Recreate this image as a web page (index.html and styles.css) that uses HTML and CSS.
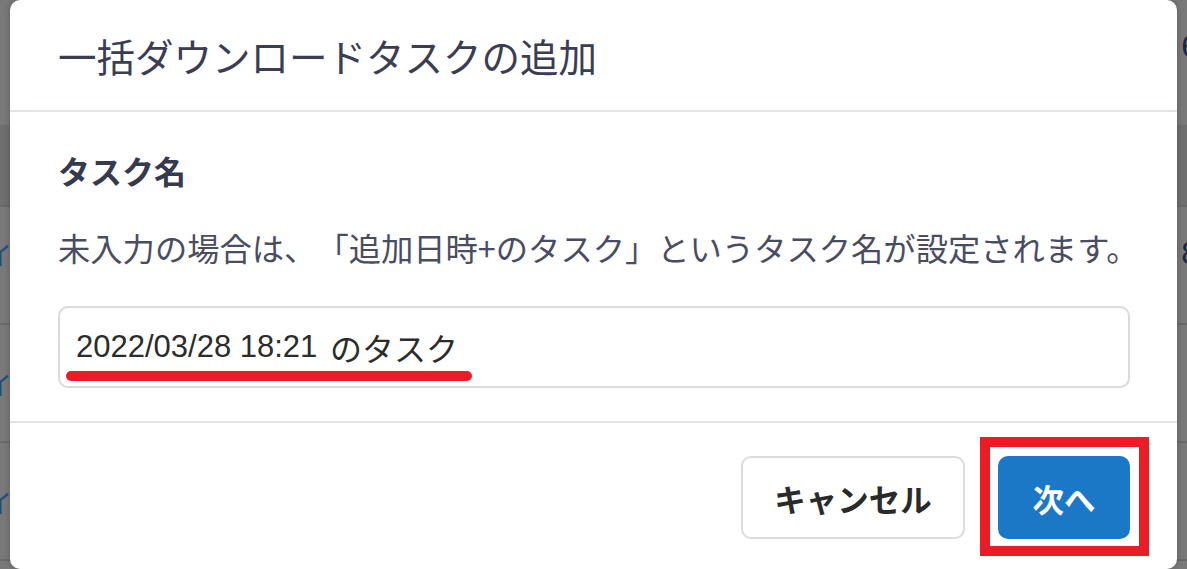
FILE: index.html
```html
<!DOCTYPE html>
<html lang="ja">
<head>
<meta charset="utf-8">
<title>一括ダウンロードタスクの追加</title>
<link rel="stylesheet" href="styles.css">
</head>
<body>
<div class="page">
  <div class="row row-top"><span class="lead"></span><span class="num">6</span></div>
  <div class="row row-band"><span class="lead"></span><span class="num"></span></div>
  <div class="row row-first"><span class="lead link">イ</span><span class="num">8</span></div>
  <div class="row"><span class="lead link">イ</span><span class="num"></span></div>
  <div class="row"><span class="lead link">イ</span><span class="num"></span></div>
  <div class="row row-last"></div>
</div>

<div class="modal">
  <div class="modal-header">
    <h2 class="modal-title">一括ダウンロードタスクの追加</h2>
  </div>
  <div class="modal-body">
    <div class="field-label">タスク名</div>
    <p class="field-help">未入力の場合は、「追加日時+のタスク」というタスク名が設定されます。</p>
    <div class="text-input">2022/03/28 18:21 <span class="input-ja">のタスク</span></div>
  </div>
  <div class="modal-footer">
    <button class="btn btn-cancel">キャンセル</button>
    <button class="btn btn-primary">次へ</button>
  </div>
  <div class="mark-underline"></div>
  <div class="mark-box"></div>
</div>
</body>
</html>
```

FILE: styles.css
```css
* { box-sizing: border-box; }

html, body {
  margin: 0;
  padding: 0;
  width: 1187px;
  height: 569px;
  overflow: hidden;
  background: #797979;
  font-family: "Noto Sans CJK JP", "Noto Sans", sans-serif;
  text-spacing-trim: space-all;
}

.page {
  display: flex;
  flex-direction: column;
  width: 1187px;
  height: 569px;
  overflow: hidden;
}

.row {
  flex: none;
  height: 118px;
  display: flex;
  justify-content: space-between;
  align-items: center;
  border-bottom: 2px solid #6a6a6a;
  overflow: hidden;
}

.row-top {
  height: 125px;
  border-bottom: none;
  align-items: flex-start;
  padding-top: 28px;
}

.row-band {
  height: 82px;
  background: #6f6f6f;
  border-bottom: 2px solid #686868;
}

.row-first {
  align-items: flex-start;
  padding-top: 28px;
}

.row-last {
  height: 8px;
  border-bottom: none;
}

.lead {
  margin-left: -14px;
  font-size: 26px;
  color: #1f4f7d;
}

.num {
  margin-right: -12px;
  font-family: "Liberation Sans", sans-serif;
  font-size: 32px;
  color: #23263a;
}

.modal {
  position: absolute;
  left: 10px;
  top: 0;
  width: 1167px;
  background: #ffffff;
  border-radius: 10px;
  box-shadow: 0 0 6px rgba(0, 0, 0, 0.25);
  display: flex;
  flex-direction: column;
}

.modal-header {
  height: 112px;
  padding: 0 48px;
  display: flex;
  align-items: center;
  border-bottom: 2px solid #e6e3e0;
}

.modal-title {
  margin: 0;
  font-size: 38.5px;
  font-weight: 400;
  line-height: 48px;
  color: #3a3d53;
}

.modal-body {
  padding: 38px 47px 33px 48px;
  border-bottom: 2px solid #e6e3e0;
}

.field-label {
  font-size: 32px;
  font-weight: 700;
  line-height: 40px;
  color: #363a4f;
}

.field-help {
  margin: 37px 0 0;
  font-size: 32.3px;
  font-weight: 400;
  line-height: 40px;
  color: #4a4d62;
  white-space: nowrap;
}

.text-input {
  margin-top: 39px;
  height: 82px;
  border: 2px solid #dcdad8;
  border-radius: 10px;
  padding: 0 16px;
  display: flex;
  align-items: center;
  white-space: pre;
  font-family: "Liberation Sans", "Noto Sans CJK JP", sans-serif;
  font-size: 31px;
  color: #2c2c2c;
}

.input-ja {
  margin-left: 4px;
  font-family: "Noto Sans CJK JP", sans-serif;
  font-size: 32px;
}

.modal-footer {
  padding: 33px 47px 30px 0;
  display: flex;
  justify-content: flex-end;
  gap: 33px;
}

.btn {
  height: 83px;
  border-radius: 10px;
  font-family: "Noto Sans CJK JP", sans-serif;
  font-size: 31.5px;
  font-weight: 700;
  cursor: pointer;
  padding: 0;
}

.btn-cancel {
  width: 224px;
  background: #ffffff;
  border: 2px solid #dedcda;
  color: #2a2a2a;
}

.btn-primary {
  width: 132px;
  background: #1a78c7;
  border: 2px solid #1a78c7;
  color: #ffffff;
}

.mark-underline {
  position: absolute;
  left: 56px;
  top: 371px;
  width: 406px;
  height: 10px;
  border-radius: 5px;
  background: #ea1c26;
}

.mark-box {
  position: absolute;
  left: 970px;
  top: 437px;
  width: 169px;
  height: 119px;
  border: 10px solid #ea1c26;
}
```
